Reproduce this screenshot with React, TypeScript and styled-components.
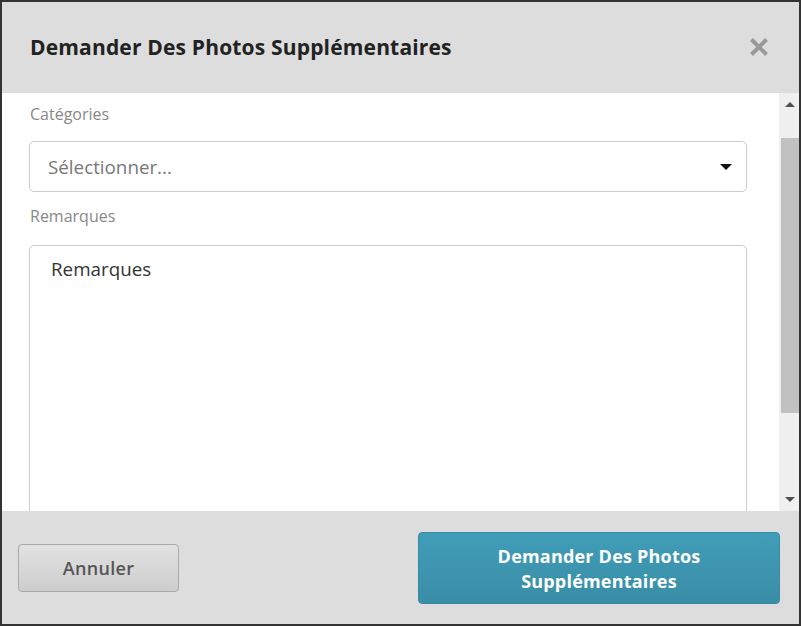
import React from "react";
import styled, { createGlobalStyle } from "styled-components";

const Global = createGlobalStyle`
  html, body { margin: 0; padding: 0; background: #ffffff; }
  body { font-family: "Open Sans", "Liberation Sans", sans-serif; }
  * { box-sizing: border-box; }
`;

const Dialog = styled.div`
  width: 801px;
  height: 626px;
  border: 2px solid #333333;
  display: flex;
  flex-direction: column;
  background: #ffffff;
  overflow: hidden;
`;

const Header = styled.div`
  height: 91px;
  flex: none;
  background: #dddddd;
  display: flex;
  align-items: center;
  justify-content: space-between;
  padding: 0 30px 2px 28px;
`;

const Title = styled.h1`
  margin: 0;
  font-size: 21px;
  font-weight: 700;
  color: #222222;
  letter-spacing: 0.17px;
`;

const CloseButton = styled.button`
  border: none;
  background: transparent;
  padding: 0;
  width: 20px;
  height: 20px;
  display: flex;
  align-items: center;
  justify-content: center;
  cursor: pointer;
`;

const Body = styled.div`
  height: 418px;
  flex: none;
  display: flex;
  overflow: hidden;
`;

const Content = styled.div`
  flex: 1;
  padding: 9px 32px 0 27px;
  display: flex;
  flex-direction: column;
  overflow: hidden;
`;

const Label = styled.label<{ $gap: number }>`
  flex: none;
  font-size: 16px;
  color: #888888;
  line-height: 24px;
  padding-left: 1px;
  margin-bottom: ${(p) => p.$gap}px;
`;

const Select = styled.div`
  height: 51px;
  flex: none;
  border: 1px solid #cccccc;
  border-radius: 5px;
  display: flex;
  align-items: center;
  justify-content: space-between;
  padding: 0 14px 0 18px;
  margin-bottom: 12px;
  font-size: 18.8px;
  color: #777777;
`;

const Caret = styled.span`
  width: 0;
  height: 0;
  border-left: 6px solid transparent;
  border-right: 6px solid transparent;
  border-top: 6px solid #111111;
`;

const TextArea = styled.div`
  height: 320px;
  flex: none;
  border: 1px solid #cccccc;
  border-radius: 5px;
  padding: 10px 21px;
  font-size: 18.8px;
  line-height: 26px;
  color: #333333;
`;

const Scrollbar = styled.div`
  width: 20px;
  flex: none;
  background: #f0f0f0;
  display: flex;
  flex-direction: column;
  align-items: stretch;
`;

const ArrowCell = styled.div`
  height: 23px;
  flex: none;
  display: flex;
  align-items: center;
  justify-content: center;
  padding-left: 1px;
`;

const ArrowUp = styled.span`
  width: 0;
  height: 0;
  border-left: 5px solid transparent;
  border-right: 5px solid transparent;
  border-bottom: 5px solid #505050;
`;

const ArrowDown = styled.span`
  width: 0;
  height: 0;
  border-left: 5px solid transparent;
  border-right: 5px solid transparent;
  border-top: 5px solid #505050;
`;

const TrackSpace = styled.div<{ $grow: number }>`
  flex: ${(p) => p.$grow};
`;

const Thumb = styled.div`
  height: 275px;
  flex: none;
  margin-left: 2px;
  background: #c1c1c1;
`;

const Footer = styled.div`
  flex: 1;
  background: #dddddd;
  display: flex;
  align-items: center;
  justify-content: space-between;
  padding: 0 19px 0 16px;
`;

const CancelButton = styled.button`
  width: 161px;
  height: 48px;
  border: 1px solid #a9a9a9;
  border-radius: 4px;
  background: linear-gradient(to bottom, #e2e2e2, #cdcdcd);
  font-family: "Open Sans", "Liberation Sans", sans-serif;
  font-size: 18px;
  font-weight: 600;
  letter-spacing: 0.3px;
  color: #555555;
  cursor: pointer;
  padding: 0;
`;

const PrimaryButton = styled.button`
  width: 362px;
  height: 72px;
  border: 1px solid #3a8aa2;
  border-radius: 4px;
  background: linear-gradient(to bottom, #409db8, #3a8da6);
  font-family: "Open Sans", "Liberation Sans", sans-serif;
  font-size: 18px;
  font-weight: 700;
  letter-spacing: 0.2px;
  line-height: 25px;
  color: #ffffff;
  cursor: pointer;
  padding: 2px 50px 0;
`;

export default function App() {
  return (
    <>
      <Global />
      <Dialog>
        <Header>
          <Title>Demander Des Photos Supplémentaires</Title>
          <CloseButton aria-label="Fermer">
            <svg width="20" height="20" viewBox="0 0 20 20">
              <path
                d="M2.5 2.5 L17.5 17.5 M17.5 2.5 L2.5 17.5"
                stroke="#999999"
                strokeWidth="4"
                strokeLinecap="butt"
              />
            </svg>
          </CloseButton>
        </Header>
        <Body>
          <Content>
            <Label $gap={15}>Catégories</Label>
            <Select>
              <span>Sélectionner...</span>
              <Caret />
            </Select>
            <Label $gap={17}>Remarques</Label>
            <TextArea>Remarques</TextArea>
          </Content>
          <Scrollbar>
            <ArrowCell>
              <ArrowUp />
            </ArrowCell>
            <TrackSpace $grow={22} />
            <Thumb />
            <TrackSpace $grow={73} />
            <ArrowCell>
              <ArrowDown />
            </ArrowCell>
          </Scrollbar>
        </Body>
        <Footer>
          <CancelButton>Annuler</CancelButton>
          <PrimaryButton>Demander Des Photos Supplémentaires</PrimaryButton>
        </Footer>
      </Dialog>
    </>
  );
}
